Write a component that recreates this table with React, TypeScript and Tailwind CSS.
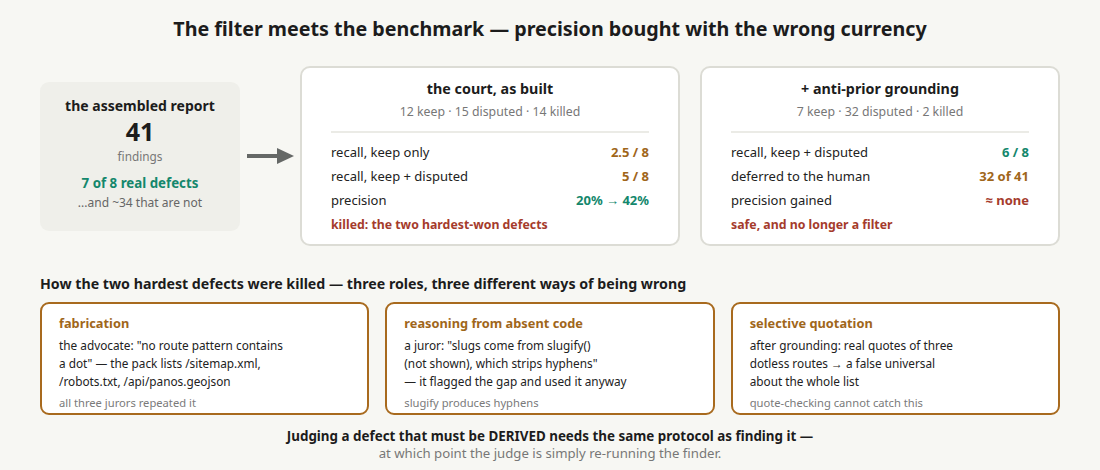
const amber = "text-[#a0661a]";
const green = "text-[#14876c]";
const red = "text-[#a53b2c]";

type Row = { label: string; value: string; tone: string };

function Verdict({
  title,
  tally,
  rows,
  note,
  width,
}: {
  title: string;
  tally: string;
  rows: Row[];
  note: string;
  width: string;
}) {
  return (
    <div className={`${width} shrink-0 rounded-[10px] border-2 border-[#dcdcd5] bg-white px-[29px] pt-[10px] pb-[10px]`}>
      <div className="text-center text-[14.3px] font-bold leading-[22px] text-[#1c1c1c]">{title}</div>
      <div className="mt-[3px] text-center text-[12.3px] leading-[18px] text-[#777]">{tally}</div>
      <div className="mt-[10px] border-t-2 border-[#ebebe6]" />
      <div className="mt-[8px] flex flex-col">
        {rows.map((r) => (
          <div key={r.label} className="flex h-[24px] items-center justify-between text-[13px]">
            <span className="text-[#222]">{r.label}</span>
            <span className={`font-bold ${r.tone}`}>{r.value}</span>
          </div>
        ))}
      </div>
      <div className={`mt-[3px] text-[12.3px] font-bold leading-[18px] ${red}`}>{note}</div>
    </div>
  );
}

function Failure({ title, lines, foot }: { title: string; lines: string[]; foot: string }) {
  return (
    <div className="flex h-[113px] flex-col rounded-[9px] border-2 border-[#a86a1e] bg-white px-[17px] pt-[10px]">
      <div className={`text-[12.8px] font-bold leading-[18px] ${amber}`}>{title}</div>
      <div className="mt-[4px] text-[11.8px] leading-[18px] text-[#222]">
        {lines.map((l) => (
          <div key={l}>{l}</div>
        ))}
      </div>
      <div className="mt-[5px] text-[11.2px] leading-[16px] text-[#7a7a7a]">{foot}</div>
    </div>
  );
}

export default function App() {
  return (
    <div
      className="h-[470px] w-[1100px] overflow-hidden bg-[#f7f7f3] text-[#1c1c1c]"
      style={{ fontFamily: '"Noto Sans", "Open Sans", sans-serif' }}
    >
      <h1 className="pt-[15px] text-center text-[19.7px] font-bold leading-[28px]">
        The filter meets the benchmark — precision bought with the wrong currency
      </h1>

      <div className="mt-[23px] flex items-center pl-[40px]">
        <div className="flex h-[149px] w-[200px] shrink-0 flex-col items-center rounded-[9px] bg-[#efefea] pt-[14px]">
          <div className="text-[14px] font-bold leading-[20px]">the assembled report</div>
          <div className="text-[25px] font-bold leading-[30px]">41</div>
          <div className="text-[11.8px] leading-[20px] text-[#777]">findings</div>
          <div className={`mt-[7px] text-[13.3px] font-bold leading-[20px] ${green}`}>7 of 8 real defects</div>
          <div className="text-[12px] leading-[20px] text-[#666]">...and ~34 that are not</div>
        </div>

        <div className="flex w-[60px] justify-center">
          <svg width="47" height="18" viewBox="0 0 47 18">
            <line x1="0" y1="9" x2="32" y2="9" stroke="#656866" strokeWidth="4" />
            <polygon points="30,1 47,9 30,17" fill="#656866" />
          </svg>
        </div>

        <div className="flex gap-[20px]">
          <Verdict
            width="w-[380px]"
            title="the court, as built"
            tally="12 keep · 15 disputed · 14 killed"
            rows={[
              { label: "recall, keep only", value: "2.5 / 8", tone: amber },
              { label: "recall, keep + disputed", value: "5 / 8", tone: amber },
              { label: "precision", value: "20% → 42%", tone: green },
            ]}
            note="killed: the two hardest-won defects"
          />
          <Verdict
            width="w-[360px]"
            title="+ anti-prior grounding"
            tally="7 keep · 32 disputed · 2 killed"
            rows={[
              { label: "recall, keep + disputed", value: "6 / 8", tone: green },
              { label: "deferred to the human", value: "32 of 41", tone: amber },
              { label: "precision gained", value: "≈ none", tone: red },
            ]}
            note="safe, and no longer a filter"
          />
        </div>
      </div>

      <div className="mt-[28px] px-[40px]">
        <h2 className="text-[14.2px] font-bold leading-[20px]">
          How the two hardest defects were killed — three roles, three different ways of being wrong
        </h2>
        <div className="mt-[8px] grid grid-cols-3 gap-[16px]">
          <Failure
            title="fabrication"
            lines={[
              'the advocate: "no route pattern contains',
              'a dot" — the pack lists /sitemap.xml,',
              "/robots.txt, /api/panos.geojson",
            ]}
            foot="all three jurors repeated it"
          />
          <Failure
            title="reasoning from absent code"
            lines={[
              'a juror: "slugs come from slugify()',
              '(not shown), which strips hyphens"',
              "— it flagged the gap and used it anyway",
            ]}
            foot="slugify produces hyphens"
          />
          <Failure
            title="selective quotation"
            lines={[
              "after grounding: real quotes of three",
              "dotless routes → a false universal",
              "about the whole list",
            ]}
            foot="quote-checking cannot catch this"
          />
        </div>
        <div className="mt-[13px] text-center leading-[17px]">
          <div className="text-[13.4px] font-bold">
            Judging a defect that must be DERIVED needs the same protocol as finding it —
          </div>
          <div className="text-[13.2px] text-[#777]">at which point the judge is simply re-running the finder.</div>
        </div>
      </div>
    </div>
  );
}
